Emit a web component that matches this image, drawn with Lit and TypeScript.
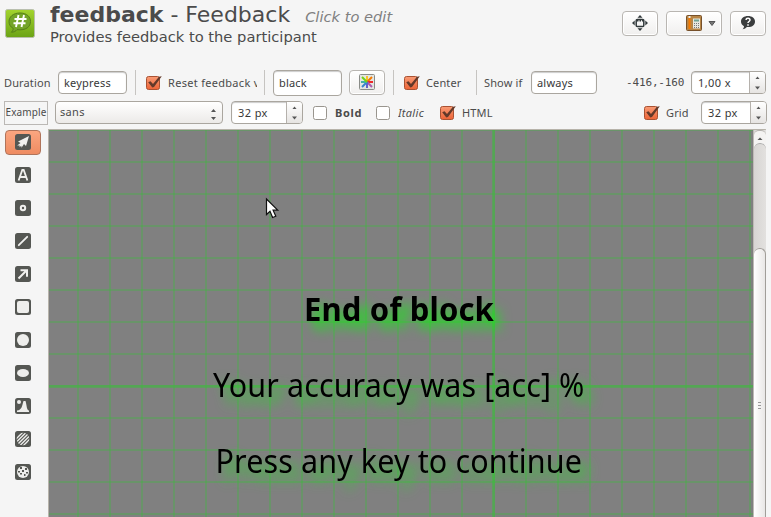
import { LitElement, html, svg, css } from "lit";
import { customElement, property } from "lit/decorators.js";

@customElement("check-box")
class CheckBox extends LitElement {
  @property({ type: Boolean }) checked = false;
  static styles = css`
    :host { display: block; flex: none; width: 16px; height: 16px; }
    svg { display: block; overflow: visible; }
  `;
  render() {
    return this.checked
      ? html`<svg width="16" height="16" viewBox="0 0 16 16">
          <defs><linearGradient id="g" x2="0" y2="1"><stop stop-color="#f99b75" /><stop offset="1" stop-color="#ed6336" /></linearGradient></defs>
          <rect x=".5" y="1.5" width="13" height="13" rx="2" fill="url(#g)" stroke="#a95233" />
          <path d="M2.200 7.200 4.500 6.200 7 9 13 1.800 15.800 1.300 8 12 6.300 12.500Z" fill="#63392a" />
        </svg>`
      : html`<svg width="16" height="16"><rect x=".5" y="1.5" width="13" height="13" rx="2" fill="#fff" stroke="#99958e" /></svg>`;
  }
}

@customElement("spin-box")
class SpinBox extends LitElement {
  @property() value = "";
  static styles = css`
    :host { display: flex; box-sizing: border-box; flex: none; height: 23px; border: 1px solid #aaa69f; border-radius: 4px; background: #fff; overflow: hidden; box-shadow: inset 0 1px 1px #ccc; }
    .value { flex: 1; padding-left: 6px; line-height: 22px; color: #383838; white-space: nowrap; letter-spacing: .4px; }
    .arrows { width: 15px; border-left: 1px solid #b5b1ac; background: linear-gradient(#fff, #e6e4e2); }
    svg { display: block; }
  `;
  render() {
    return html`<div class="value">${this.value}</div>
      <div class="arrows"><svg width="15" height="21"><path d="M5.500 7 7.500 4.500 9.500 7Z" fill="#555" /><path d="M5 14.500h5l-2.500 3Z" fill="#555" /></svg></div>`;
  }
}

const hash = svg`<path d="M21.500 15.500 19 27.500M27 15.500 24.500 27.500M17.500 19.500H29.500M16.500 23.700H28.500" transform="translate(-3 -.5)" stroke="#fff" stroke-width="1.900" />`;

const toolGlyphs = [
  svg`<path d="M14 2 11 12 9 10 6.500 13.800 6.300 11.800 4.500 13.300 4.700 11.500 2.200 11.500 5.500 9 3 7.500Z" fill="#f1f1ef" />`,
  svg`<path d="M3.600 13.500 7.300 3h1.400l3.700 10.500M5 10h6" fill="none" stroke="#f1f1ef" stroke-width="1.800" />`,
  svg`<circle cx="8" cy="8" r="2.200" fill="none" stroke="#f1f1ef" stroke-width="2" />`,
  svg`<path d="M3.800 12.200 12.200 3.800" stroke="#f1f1ef" stroke-width="1.800" stroke-linecap="round" />`,
  svg`<path d="M3.500 12.500 11.500 4.500M5.500 4.300H12v6.500" fill="none" stroke="#f1f1ef" stroke-width="2" />`,
  svg`<rect x="2" y="2" width="12" height="12" rx="2" fill="#eeeeec" />`,
  svg`<circle cx="8" cy="8" r="6" fill="#eeeeec" />`,
  svg`<ellipse cx="8" cy="8" rx="6" ry="4" fill="#eeeeec" />`,
  svg`<circle cx="4" cy="4" r="2" fill="#eeeeec" /><path d="M2 14v-1.500C7 12 7 8 8.500 3h2C12 8 11.500 12 14 12.500V14Z" fill="#eeeeec" />`,
  svg`<clipPath id="disc"><circle cx="8" cy="8" r="6.300" /></clipPath><path clip-path="url(#disc)" d="M-1 10 10-1M-1 13.500 13.500-1M0 16 16 0M3.500 16 16 3.500M7 16 16 7" stroke="#eeeeec" stroke-width="1.400" />`,
  svg`<circle cx="8" cy="8" r="6" fill="#eeeeec" /><path d="M5 3h2v2H5zM10 4h2v2h-2zM7 6h2v2H7zM3 7h2v1.500H3zM11 8h2v1.500h-2zM5 9h2v1.500H5zM9 10h1.500v2H9z" fill="#555753" />`,
];

@customElement("tool-button")
class ToolButton extends LitElement {
  @property({ type: Number }) index = 0;
  @property({ type: Boolean, reflect: true }) active = false;
  static styles = css`
    :host { display: flex; box-sizing: border-box; width: 36px; height: 25px; align-items: center; justify-content: center; border: 1px solid transparent; border-radius: 4px; }
    :host([active]) { border-color: #b0745b; background: linear-gradient(#fba680, #ef8c62); }
    svg { display: block; margin-bottom: 1px; }
  `;
  render() {
    return html`<svg width="16" height="16"><rect width="16" height="16" rx="2.500" fill="#555753" />${toolGlyphs[this.index]}</svg>`;
  }
}

const steps = (from: number, to: number) => {
  const out: number[] = [];
  for (let v = from; v <= to; v += 32) out.push(v);
  return out;
};

@customElement("sketch-canvas")
class SketchCanvas extends LitElement {
  static styles = css`
    :host { display: block; width: 704px; height: 387px; background: #808080; }
    svg { display: block; }
    .line { stroke: #40b840; stroke-opacity: .36; stroke-width: 2; }
    .axis { stroke: #40b840; stroke-opacity: .5; stroke-width: 3; }
    .text { font: 32px "Noto Sans", sans-serif; fill: #000; filter: drop-shadow(8px 8px 6px #22dd22dd); }
    .bold { font-weight: 700; filter: drop-shadow(8px 8px 6px #11ee11); }
  `;
  render() {
    return html`<svg width="704" height="387">
      ${steps(29, 704).map((x) => svg`<path class="line" d="M${x} 0V387" />`)}
      ${steps(0, 387).map((y) => svg`<path class="line" d="M0 ${y}H704" />`)}
      <path class="axis" d="M444.500 0V387" /><path class="axis" d="M0 256.500H704" />
      <text class="text bold" x="255" y="191" textLength="190" lengthAdjust="spacingAndGlyphs">End of block</text>
      <text class="text" x="164" y="267" textLength="371.500" lengthAdjust="spacingAndGlyphs">Your accuracy was [acc] %</text>
      <text class="text" x="166.500" y="343" textLength="366.500" lengthAdjust="spacingAndGlyphs">Press any key to continue</text>
      <path d="M217.500 69v15.500l3.500-3.300 2.600 6.300 3.200-1.300-2.700-6h4.600Z" fill="#fff" stroke="#111" stroke-width="1.200" />
    </svg>`;
  }
}

@customElement("app-root")
class AppRoot extends LitElement {
  static styles = css`
    :host { display: block; box-sizing: border-box; width: 771px; height: 517px; overflow: hidden; background: #f5f5f5; color: #4b4b4b; font: 11px "Noto Sans", sans-serif; letter-spacing: .130px; }
    svg { display: block; }
    .header { display: flex; height: 68px; font-family: "DejaVu Sans", sans-serif; letter-spacing: 0; }
    .logo { margin: 8px 0 0 4px; width: 32px; }
    .titles { margin-left: 14px; flex: 1; white-space: nowrap; }
    .title { font-size: 22px; line-height: 29px; height: 28px; }
    .hint { font-size: 14.650px; font-style: italic; color: #808080; margin-left: 8px; }
    .subtitle { font-size: 14.700px; line-height: 17px; }
    .actions { display: flex; gap: 8px; margin: 11px 5px 0 0; }
    .btn { box-sizing: border-box; display: flex; align-items: center; justify-content: center; flex: none; width: 36px; height: 25px; border: 1px solid #b9b6b2; border-radius: 4px; background: linear-gradient(#fff, #f0efee); box-shadow: inset 0 0 0 1px #fff; }
    .btn svg { margin-bottom: 1px; }
    .wide { width: 56px; gap: 6px; padding-left: 13px; }
    .row { display: flex; align-items: center; height: 29px; white-space: nowrap; }
    .second { margin-top: 1px; }
    .row > * { flex: none; }
    .input { box-sizing: border-box; height: 23px; line-height: 21px; padding-left: 5px; background: #fff; border: 1px solid #aaa69f; border-radius: 4px; color: #383838; box-shadow: inset 0 1px 1px #ccc; letter-spacing: .2px; }
    .tall { height: 26px; line-height: 23px; }
    .sep { width: 1px; height: 25px; background: #c6c4c1; }
    .lbl { overflow: hidden; line-height: 18px; }
    .duration { margin-left: 4px; width: 54px; }
    .w69 { width: 69px; }
    .gap7 { margin-left: 7px; }
    .gap8 { margin-left: 8px; }
    .gap10 { margin-left: 10px; }
    .reset { margin-left: 6px; width: 89px; letter-spacing: .3px; }
    .center { margin-left: 6px; width: 50px; }
    .show { margin-left: 7px; width: 47px; }
    .pos { margin-left: 29px; width: 65px; font: 11px "DejaVu Sans Mono", monospace; letter-spacing: -.150px; }
    .w75 { width: 75px; }
    .example { box-sizing: border-box; margin-left: 4px; width: 44px; height: 24px; border: 1px solid #bbb8b5; font-size: 10px; line-height: 21px; text-align: center; }
    .combo { box-sizing: border-box; display: flex; justify-content: space-between; margin-left: 7px; width: 168px; height: 23px; padding: 0 4px 0 4px; line-height: 20px; border: 1px solid #aaa69f; border-radius: 4px; background: linear-gradient(#fff, #eceae8); letter-spacing: .3px; }
    .w72 { width: 72px; }
    .bold { margin-left: 6px; width: 41px; font-weight: 700; letter-spacing: .7px; }
    .italic { margin-left: 6px; width: 42px; font-style: italic; letter-spacing: .3px; }
    .html { margin-left: 6px; width: 182px; }
    .grid { margin-left: 6px; width: 35px; }
    .w66 { width: 66px; }
    .work { display: flex; align-items: flex-start; height: 390px; }
    .tools { display: flex; flex-direction: column; gap: 8px; width: 48px; box-sizing: border-box; padding: 1px 0 0 5px; margin-top: 2px; }
    .frame { display: flex; margin-top: 2px; border-left: 1px solid #b7b3aa; border-top: 1px solid #b7b3aa; border-right: 1px solid #c2bfba; width: 718px; box-sizing: border-box; }
    .scroll { box-sizing: border-box; width: 13px; height: 387px; background: linear-gradient(90deg, #d7d5d3, #e3e1df); border-left: 1px solid #bebab6; display: flex; flex-direction: column; }
    .up { box-sizing: border-box; height: 17px; border-top: 1px solid #b5b2ae; border-radius: 5px 5px 0 0; background: #f4f3f2; }
    .trackcap { height: 101px; margin-top: -4px; box-sizing: border-box; border-top: 1px solid #aaa; border-radius: 6px 6px 0 0; background: linear-gradient(90deg, #d7d5d3, #e3e1df); }
    .thumb { flex: 1; margin-top: 4px; border: 1px solid #a19e99; border-bottom: 0; border-left: 0; border-radius: 6px 6px 0 0; background: linear-gradient(90deg, #fff, #e9e7e6); display: flex; justify-content: center; }
    .grip { margin-top: 152px; }
  `;
  render() {
    return html`
      <div class="header">
        <svg class="logo" width="32" height="32" viewBox="4 8 32 32">
          <defs><linearGradient id="lg" x2="0" y2="1"><stop stop-color="#a3d42e" /><stop offset="1" stop-color="#6ba316" /></linearGradient></defs>
          <rect x="5.500" y="9.500" width="29" height="28" rx="2" fill="url(#lg)" stroke="#b9bfae" />
          <path d="M20 13C13 13 9 17 9 21.500c0 3 1.500 5.500 4.300 7-.3 1.800-1 2.800-2 3.700 2.700 0 4.500-1 5.700-2.500 9 1 13.500-3 13.500-8.200C30.500 17 27 13 20 13Z" fill="#73a428" stroke="#568017" />
          ${hash}
        </svg>
        <div class="titles">
          <div class="title"><b>feedback</b> - Feedback <span class="hint">Click to edit</span></div>
          <div class="subtitle">Provides feedback to the participant</div>
        </div>
        <div class="actions">
          <div class="btn"><svg width="16" height="16"><path d="M8 0 10.500 2.700h-5ZM8 16l2.500-2.700h-5ZM0 8l2.700-2.500v5ZM16 8l-2.700-2.500v5Z" fill="#30383a" /><rect x="4.200" y="4.500" width="7.600" height="7" rx="1" fill="#f5f5f5" stroke="#30383a" stroke-width="1.500" /><path d="M5 5.500h6" stroke="#30383a" stroke-width="2" stroke-dasharray="1.500 1" /></svg></div>
          <div class="btn wide"><svg width="16" height="16"><rect x=".5" y=".5" width="15" height="15" rx="1" fill="#b78545" stroke="#76502a" /><path d="M3.500 3v11" stroke="#f57900" stroke-width="2" /><path d="M3.500 1v2" stroke="#eee" stroke-width="2" /><rect x="7" y="3.500" width="7" height="10" fill="#e7e8df" /><rect x="8" y="4.500" width="5" height="2" fill="#6fa193" /><path d="M8 8.500h5M8 10.500h5M8 12.500h5" stroke="#777" stroke-dasharray="1 1" /></svg><svg width="8" height="8"><path d="M1 2.500h6L4 6.500Z" fill="#777" stroke="#555" /></svg></div>
          <div class="btn"><svg width="16" height="16"><path d="M8 1C4 1 1 3.200 1 6.500c0 2 1 3.700 3 4.700-.1 1.300-.6 2.200-1.500 3C4.500 14 6 13 6.800 12 12 12.500 15 10 15 6.500 15 3.200 12 1 8 1Z" fill="#3b3d3e" /><path d="M6 5c.1-2.400 4-2.200 4 0 0 1.500-2 1.500-2 3M8 9.200v1.500" stroke="#fff" stroke-width="1.500" fill="none" /></svg></div>
        </div>
      </div>
      <div class="row">
        <div class="lbl duration">Duration</div>
        <div class="input w69">keypress</div>
        <div class="sep gap8"></div>
        <check-box class="gap10" checked></check-box>
        <div class="lbl reset">Reset feedback v</div>
        <div class="sep gap7"></div>
        <div class="input tall w69 gap8">black</div>
        <div class="btn gap7"><svg width="16" height="16"><rect x=".5" y=".5" width="15" height="15" rx="1" fill="#e4e6e2" stroke="#8a8c88" /><g stroke-width="2"><path d="M8 8V2" stroke="#fcc22a" /><path d="m8 8 5-5" stroke="#f57900" /><path d="M8 8h6" stroke="#ef2929" /><path d="m8 8 5 5" stroke="#ad5bab" /><path d="M8 8v6" stroke="#6461c9" /><path d="m8 8-5 5" stroke="#3584cf" /><path d="M8 8H2" stroke="#40b2a3" /><path d="M8 8 3 3" stroke="#73d216" /></g></svg></div>
        <div class="sep gap8"></div>
        <check-box class="gap10" checked></check-box>
        <div class="lbl center">Center</div>
        <div class="sep"></div>
        <div class="lbl show">Show if</div>
        <div class="input w66">always</div>
        <div class="pos">-416,-160</div>
        <spin-box class="w75" value="1,00 x"></spin-box>
      </div>
      <div class="row second">
        <div class="example">Example</div>
        <div class="combo">sans<svg width="9" height="21"><path d="M2 10h5L4.500 7ZM2 15h5l-2.500 3Z" fill="#555" /></svg></div>
        <spin-box class="w72 gap8" value="32 px"></spin-box>
        <check-box class="gap10"></check-box>
        <div class="lbl bold">Bold</div>
        <check-box></check-box>
        <div class="lbl italic">Italic</div>
        <check-box checked></check-box>
        <div class="lbl html">HTML</div>
        <check-box checked></check-box>
        <div class="lbl grid">Grid</div>
        <spin-box class="w66" value="32 px"></spin-box>
      </div>
      <div class="work">
        <div class="tools">${toolGlyphs.map((_, i) => html`<tool-button .index=${i} ?active=${i === 0}></tool-button>`)}</div>
        <div class="frame">
          <sketch-canvas></sketch-canvas>
          <div class="scroll">
            <div class="up"><svg width="12" height="15"><path d="M3.500 9 6 6.500 8.500 9Z" fill="#555" /></svg></div>
            <div class="trackcap"></div>
            <div class="thumb"><svg class="grip" width="5" height="9"><path d="M1 1.500h3M1 4.500h3M1 7.500h3" stroke="#999" /></svg></div>
          </div>
        </div>
      </div>
    `;
  }
}
